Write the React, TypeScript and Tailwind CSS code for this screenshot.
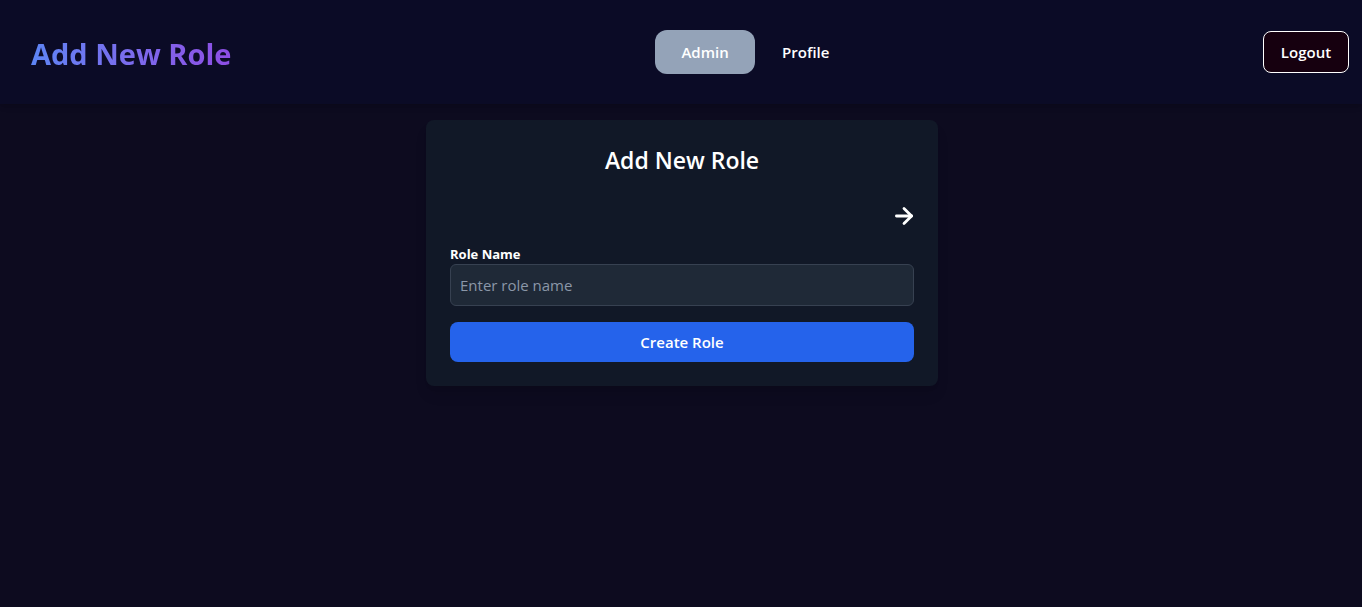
import { ArrowRight } from "lucide-react";

export default function App() {
  return (
    <div
      className="min-h-[607px] bg-[#0d0b1f] text-white"
      style={{ fontFamily: '"Segoe UI", "Open Sans", "Noto Sans", sans-serif' }}
    >
      <header className="h-[104px] bg-[#0b0b26] shadow-md flex items-center justify-between pl-[31px] pr-[13px]">
        <h1 className="text-[29px] font-bold bg-linear-to-r from-[#5d85f5] to-[#8d4de4] bg-clip-text text-transparent leading-none pt-[2px]">
          Add New Role
        </h1>
        <nav className="flex items-center gap-[27px] -ml-[10px]">
          <button className="h-[44px] w-[100px] rounded-xl bg-[#94a3b8] text-white font-semibold text-[15px]">
            Admin
          </button>
          <button className="text-white font-semibold text-[15px]">Profile</button>
        </nav>
        <button className="h-[42px] w-[86px] rounded-lg border border-white bg-[#16000f] text-white font-semibold text-[15px]">
          Logout
        </button>
      </header>

      <main className="flex justify-center pt-4 pl-[2px]">
        <div className="w-[512px] bg-[#111827] rounded-lg p-6 shadow-lg">
          <h2 className="text-[23px] font-semibold text-center leading-8 mb-6">Add New Role</h2>
          <div className="h-8 flex items-center justify-end mb-3">
            <ArrowRight className="w-[26px] h-[26px] -mr-[3px]" strokeWidth={2.6} />
          </div>
          <label className="block text-[13px] font-bold leading-5">Role Name</label>
          <input
            type="text"
            placeholder="Enter role name"
            className="w-full h-[42px] px-[9px] rounded-md bg-[#1f2937] border border-[#374151] text-white placeholder:text-[#8b97a8] text-[15px] outline-none"
          />
          <button className="mt-4 w-full h-10 rounded-lg bg-[#2563eb] font-semibold text-[15px]">
            Create Role
          </button>
        </div>
      </main>
    </div>
  );
}
